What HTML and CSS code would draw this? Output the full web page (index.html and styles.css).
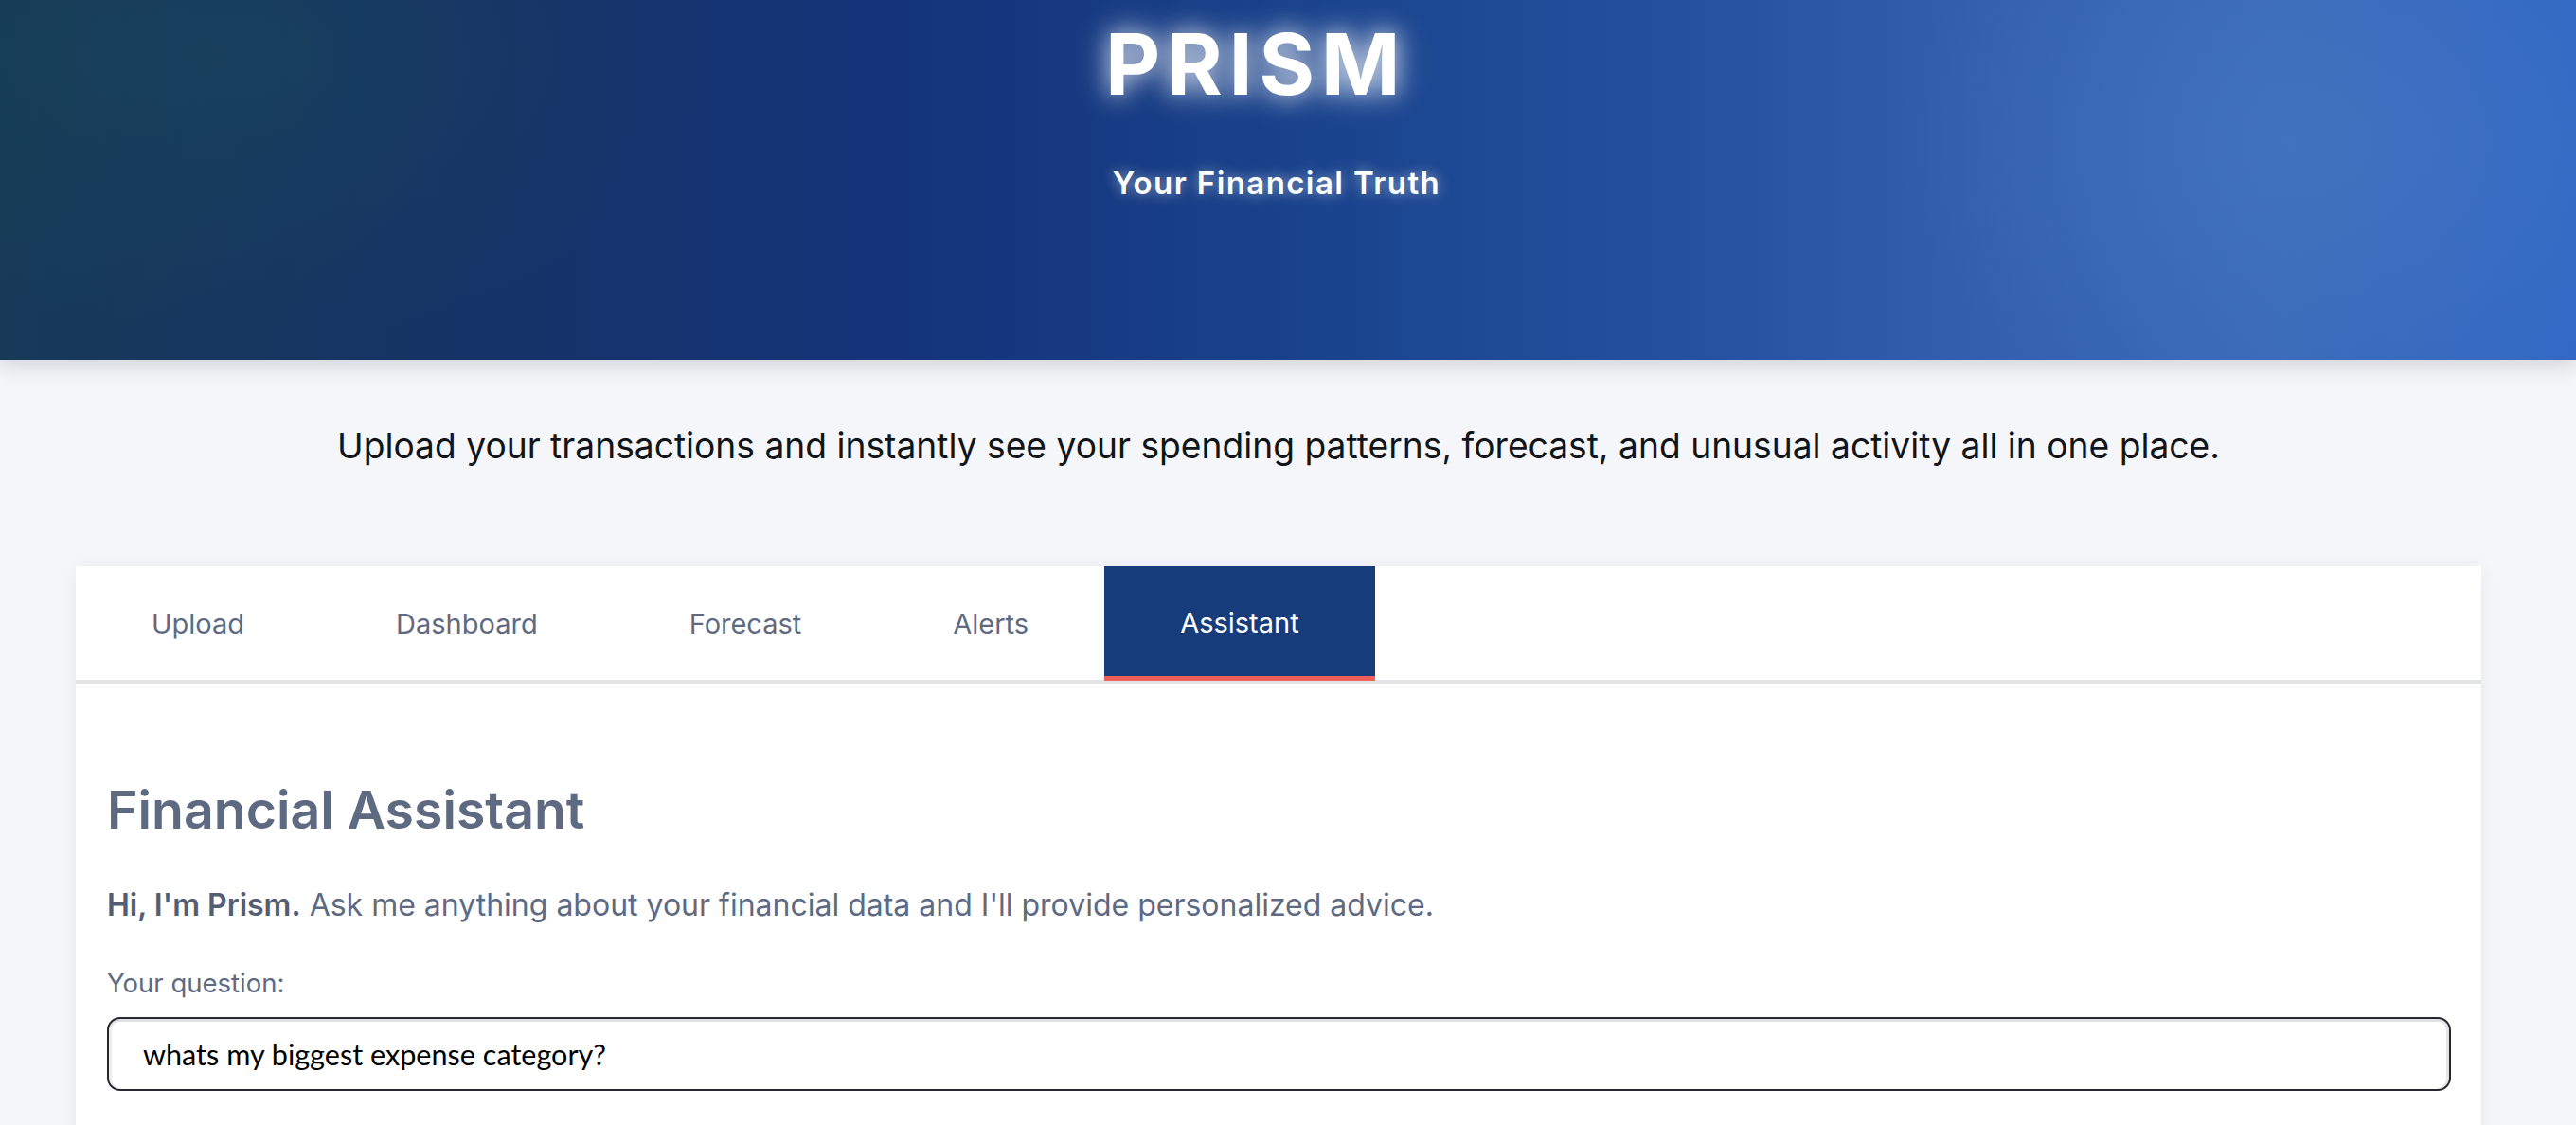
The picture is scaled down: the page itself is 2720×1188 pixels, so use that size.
FILE: index.html
```html
<!DOCTYPE html>
<html lang="en">
<head>
<meta charset="utf-8">
<title>Prism</title>
<link rel="stylesheet" href="styles.css">
</head>
<body>
<header class="hero">
  <h1 class="brand">PRISM</h1>
  <p class="motto">Your Financial Truth</p>
</header>
<p class="tagline">Upload your transactions and instantly see your spending patterns, forecast, and unusual activity all in one place.</p>
<main class="card">
  <nav class="tabs">
    <div class="tab">Upload</div>
    <div class="tab">Dashboard</div>
    <div class="tab">Forecast</div>
    <div class="tab">Alerts</div>
    <div class="tab active">Assistant</div>
  </nav>
  <section class="panel">
    <h2 class="panel-title">Financial Assistant</h2>
    <p class="intro"><strong>Hi, I'm Prism.</strong> Ask me anything about your financial data and I'll provide personalized advice.</p>
    <label class="label" for="q">Your question:</label>
    <input class="question" id="q" type="text" value="whats my biggest expense category?">
  </section>
</main>
</body>
</html>
```
FILE: styles.css
```css
html, body {
  margin: 0;
  padding: 0;
}
body {
  background: #f5f6f9;
  font-family: Inter, "Noto Sans", sans-serif;
  overflow: hidden;
  height: 1188px;
}
.hero {
  height: 380px;
  box-sizing: border-box;
  padding-top: 8px;
  text-align: center;
  color: #fff;
  background:
    radial-gradient(ellipse 420px 300px at 2420px 150px, rgba(80, 130, 200, 0.35), rgba(80, 130, 200, 0) 100%),
    radial-gradient(ellipse 500px 300px at 250px 60px, rgba(30, 80, 90, 0.35), rgba(30, 80, 90, 0) 100%),
    linear-gradient(90deg, #163a58 0%, #153366 18%, #14337a 35%, #1a448e 52%, #24509e 65%, #3361b0 78%, #3a6ab8 88%, #3369c5 100%);
  box-shadow: 0 6px 22px rgba(40, 50, 70, 0.18);
  position: relative;
}
.brand {
  margin: 0;
  padding-right: 68px;
  font-size: 90px;
  font-weight: 700;
  letter-spacing: 6.5px;
  line-height: 120px;
  text-shadow: 0 0 24px rgba(255, 255, 255, 0.75), 0 0 40px rgba(255, 255, 255, 0.4);
}
.motto {
  margin: 45px 0 0;
  padding-right: 24px;
  font-size: 33px;
  font-weight: 600;
  letter-spacing: 1.4px;
  line-height: 40px;
  text-shadow: 0 0 14px rgba(255, 255, 255, 0.6);
}
.tagline {
  margin: 66px 0 0;
  padding-right: 20px;
  text-align: center;
  font-size: 37.2px;
  line-height: 50px;
  color: #111418;
}
.card {
  margin: 102px 0 0 80px;
  width: 2540px;
  height: 700px;
  background: #fff;
  box-shadow: 0 2px 18px rgba(30, 40, 60, 0.06);
}
.tabs {
  display: flex;
  height: 120px;
  border-bottom: 4px solid #e2e4e8;
}
.tab {
  display: flex;
  align-items: center;
  padding: 0 80px;
  font-size: 29px;
  color: #5e6a82;
  box-sizing: border-box;
}
.tab.active {
  background: #173c7b;
  color: #fff;
  border-bottom: 5px solid #f0605a;
  padding-top: 3px;
  margin-bottom: -1px;
}
.panel {
  padding: 98px 32px 0 33px;
}
.panel-title {
  margin: 0;
  font-size: 55.4px;
  font-weight: 600;
  line-height: 70px;
  color: #5e6a82;
}
.intro {
  margin: 44px 0 0;
  font-size: 32px;
  line-height: 44px;
  color: #5e6a82;
}
.intro strong {
  font-weight: 600;
  color: #535e74;
}
.label {
  display: block;
  margin-top: 40px;
  font-size: 27.5px;
  line-height: 40px;
  color: #5e6a82;
}
.question {
  display: block;
  box-sizing: border-box;
  width: 100%;
  height: 78px;
  margin-top: 16px;
  padding: 0 36px;
  border: 2px solid #27272f;
  border-radius: 14px;
  box-shadow: inset 0 3px 0 #dfe1e5, inset -3px 0 0 #e4e6ea, inset 3px 0 0 #eceef1;
  font-family: Lato, "Open Sans", sans-serif;
  font-size: 30.6px;
  color: #000;
  background: #fff;
  outline: none;
}
```
